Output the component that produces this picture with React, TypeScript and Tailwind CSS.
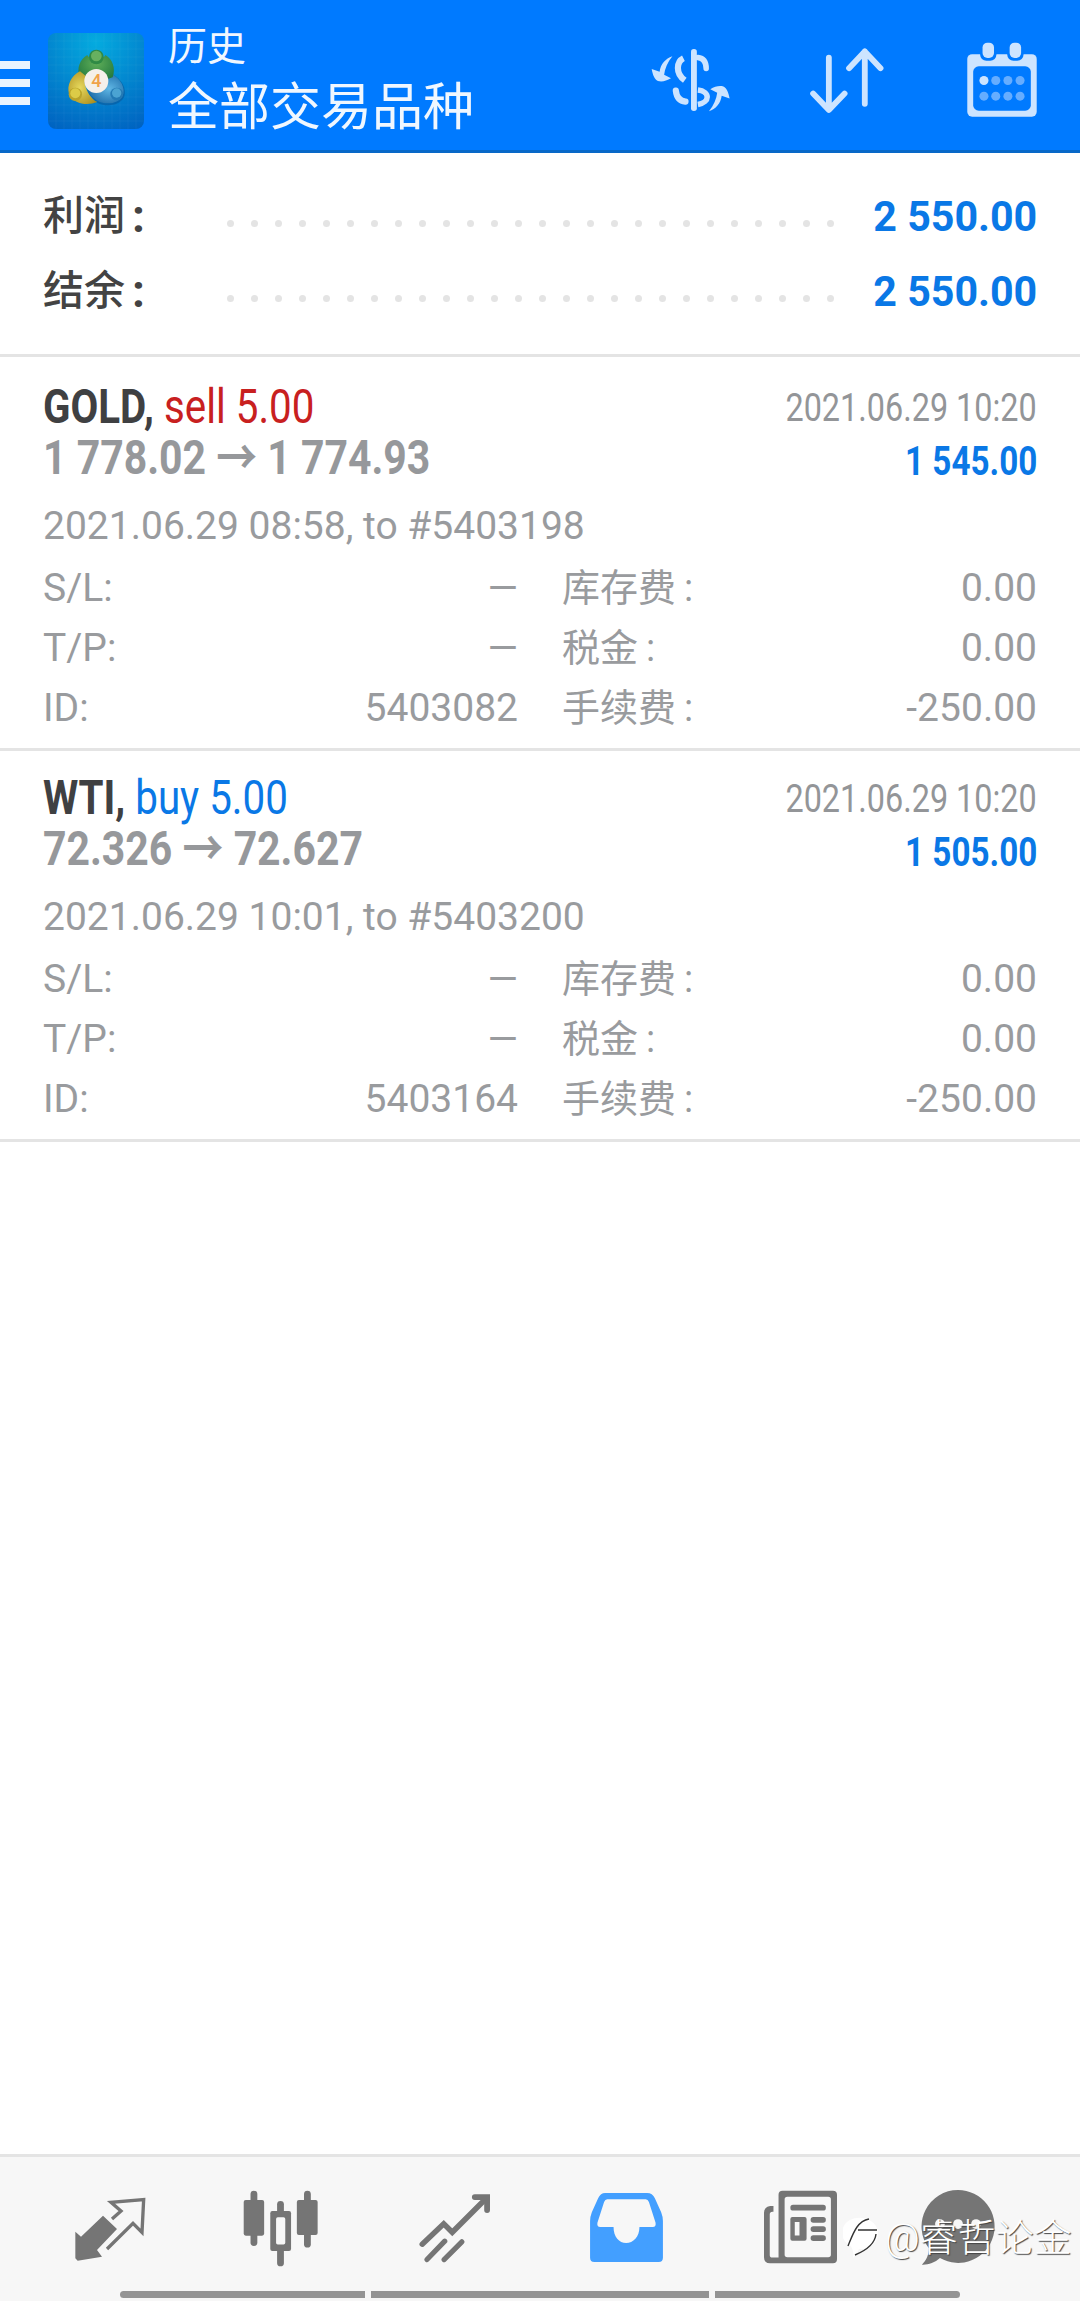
const font = "font-['Roboto','Noto_Sans_CJK_SC',sans-serif]";

function Logo() {
  const grid = [168, 192, 216, 240, 264, 288, 312, 336, 360, 384, 408];
  return (
    <svg width="96" height="96" viewBox="144 99 288 288" className="shrink-0">
      <defs>
        <radialGradient id="bgG" cx="0.5" cy="0.1" r="1">
          <stop offset="0" stopColor="#04abdf" />
          <stop offset="1" stopColor="#0062c0" />
        </radialGradient>
        <radialGradient id="gr" cx="0.5" cy="0.3" r="0.8">
          <stop offset="0" stopColor="#5fae58" />
          <stop offset="1" stopColor="#176f3a" />
        </radialGradient>
        <radialGradient id="ye" cx="0.4" cy="0.5" r="0.7">
          <stop offset="0" stopColor="#e6d85c" />
          <stop offset="1" stopColor="#a98a1c" />
        </radialGradient>
        <radialGradient id="bl" cx="0.6" cy="0.5" r="0.7">
          <stop offset="0" stopColor="#5fb6e4" />
          <stop offset="1" stopColor="#125f9f" />
        </radialGradient>
      </defs>
      <rect x="144" y="99" width="288" height="288" rx="24" fill="url(#bgG)" />
      {grid.map((g) => (
        <path key={g} d={`M${g} 99V387`} stroke="#ffffff" strokeOpacity="0.07" strokeWidth="2" />
      ))}
      {grid.map((g) => (
        <path key={g} d={`M144 ${g - 45}H432`} stroke="#ffffff" strokeOpacity="0.07" strokeWidth="2" />
      ))}
      <path d="M335 222C365 235 382 268 372 292C358 318 318 322 292 308C276 298 266 284 262 270L320 250Z" fill="#0a4f8f" opacity="0.5" />
      <path d="M335 222C362 235 378 266 368 288C355 312 318 316 292 302C276 292 266 280 262 268L320 248Z" fill="url(#bl)" />
      <path d="M262 165C240 178 228 205 240 232L289 248L338 232C348 205 338 178 316 165C310 180 268 180 262 165Z" fill="url(#gr)" />
      <path d="M240 214C215 226 198 256 208 284C222 312 262 318 292 306C272 296 258 272 254 248L262 232Z" fill="url(#ye)" />
      <circle cx="289" cy="171" r="22" fill="#2f8a45" />
      <circle cx="289" cy="168" r="16" fill="#67b060" />
      <circle cx="226" cy="283" r="20" fill="#b9a32a" />
      <circle cx="226" cy="280" r="15" fill="#dccb47" />
      <circle cx="350" cy="282" r="19" fill="#2379b4" />
      <circle cx="350" cy="279" r="14" fill="#4ba3d2" />
      <circle cx="289" cy="243" r="36" fill="#f5f0ea" />
      <text x="289" y="262" textAnchor="middle" fontSize="54" fontWeight="500" fill="#f0a34a" fontFamily="Roboto">4</text>
    </svg>
  );
}

function DollarIcon() {
  const c = "#cde4ff";
  const arrow = "M382 168C362 175 348 190 345 213L322 205C325 222 330 235 340 240C352 243 365 240 378 232L358 222C360 205 368 185 382 168Z";
  return (
    <svg width="80" height="66" viewBox="320 145 232 190" className="shrink-0">
      <rect x="436" y="147" width="17" height="180" rx="8" fill={c} />
      <path d="M456 172C472 174 480 186 480 204" stroke={c} strokeWidth="16" fill="none" strokeLinecap="round" />
      <path d="M414 174C394 184 390 218 418 238" stroke={c} strokeWidth="18" fill="none" />
      <path d="M392 268C394 286 404 298 420 300" stroke={c} strokeWidth="18" fill="none" strokeLinecap="round" />
      <path d="M456 266C492 270 492 302 456 308" stroke={c} strokeWidth="16" fill="none" />
      <path d={arrow} fill={c} />
      <path d={arrow} fill={c} transform="rotate(180 435 248)" />
    </svg>
  );
}

function SortIcon() {
  return (
    <svg width="76" height="68" viewBox="778 145 222 195" className="shrink-0" fill="none" stroke="#cde4ff" strokeWidth="17" strokeLinecap="round" strokeLinejoin="round">
      <path d="M836 174V326M790 279L836 327L882 279" />
      <path d="M941 309V156M895 205L941 156L987 205" />
    </svg>
  );
}

function CalendarIcon() {
  const xs = [1291, 1325, 1360, 1395];
  return (
    <svg width="70" height="75" viewBox="1243 130 200 216" className="shrink-0">
      <rect x="1243" y="165" width="200" height="180" rx="14" fill="#cde4ff" />
      <rect x="1280" y="126" width="47" height="58" rx="18" fill="#007aff" />
      <rect x="1358" y="126" width="47" height="58" rx="18" fill="#007aff" />
      <rect x="1287" y="132" width="33" height="44" rx="14" fill="#cde4ff" />
      <rect x="1365" y="132" width="33" height="44" rx="14" fill="#cde4ff" />
      <rect x="1260" y="200" width="166" height="128" rx="16" fill="#007aff" />
      {xs.map((x, i) => (
        <circle key={x} cx={x} cy="241" r="13" fill={i === 0 ? "#cde4ff" : "#66adff"} />
      ))}
      {xs.map((x) => (
        <circle key={x} cx={x} cy="286" r="13" fill="#66adff" />
      ))}
    </svg>
  );
}

function Dots() {
  return (
    <div className="flex gap-[17px] items-center w-[607px] shrink-0">
      {Array.from({ length: 26 }).map((_, i) => (
        <span key={i} className="w-[7px] h-[7px] rounded-full bg-[#e4e4e4] shrink-0" />
      ))}
    </div>
  );
}

function SummaryRow({ label }: { label: string }) {
  return (
    <div className="flex items-center h-[75px]">
      <span className="w-[184px] shrink-0 text-[41px] leading-none font-medium text-[#434343] mb-[1px] flex items-center whitespace-nowrap">
        {label}
        <span className="ml-[7px] text-[46px] leading-none font-bold">:</span>
      </span>
      <div className="pt-[13px]">
        <Dots />
      </div>
      <span className="ml-auto text-[42px] leading-none font-bold text-[#0a78e6] mt-[1px] inline-block whitespace-nowrap origin-right scale-x-[0.98]">2 550.00</span>
    </div>
  );
}

function Field({ label, value, cjk }: { label: string; value: string; cjk?: boolean }) {
  return (
    <div className="flex items-center justify-between h-[60px] text-[39px] leading-none text-[#999b9e]">
      {cjk ? (
        <span className="text-[38px] leading-none">
          {label}
          <span className="ml-[8px]">:</span>
        </span>
      ) : (
        <span>{label}</span>
      )}
      <span>{value}</span>
    </div>
  );
}

type Trade = {
  sym: string; side: string; sideCls: string; price: string; profit: string;
  sub: string; id: string; cardCls: string;
};

function Card({ t }: { t: Trade }) {
  return (
    <div className={`shrink-0 border-b-[3px] border-[#e4e4e4] px-[43px] flex flex-col ${t.cardCls}`}>
      <div className="flex items-center justify-between h-[44px]">
        <span className="text-[48px] leading-[44px] whitespace-nowrap origin-left scale-x-[0.84] inline-block">
          <b className="font-bold text-[#3f4042]">{t.sym},</b> <span className={t.sideCls}>{t.side}</span>
        </span>
        <span className="mt-[2px] text-[39px] leading-none text-[#939598] whitespace-nowrap origin-right scale-x-[0.83] inline-block">2021.06.29 10:20</span>
      </div>
      <div className="flex items-center justify-between h-[60px]">
        <span className="-mt-[2px] text-[48px] leading-[44px] font-bold text-[#96989b] whitespace-nowrap origin-left scale-x-[0.853] inline-block">{t.price}</span>
        <span className="mt-[5px] text-[40px] leading-none font-bold text-[#0a78e6] whitespace-nowrap origin-right scale-x-[0.83] inline-block">{t.profit}</span>
      </div>
      <div className="mt-[7px] h-[60px] flex items-center text-[39px] leading-none text-[#999b9e] whitespace-nowrap">{t.sub}</div>
      <div className="mt-[2px] grid grid-cols-[475px_475px] gap-x-[44px]">
        <Field label="S/L:" value="—" />
        <Field label="库存费" value="0.00" cjk />
        <Field label="T/P:" value="—" />
        <Field label="税金" value="0.00" cjk />
        <Field label="ID:" value={t.id} />
        <Field label="手续费" value="-250.00" cjk />
      </div>
    </div>
  );
}

function TransferIcon() {
  return (
    <svg width="72" height="64" viewBox="213 166 212 192" className="shrink-0">
      <path d="M215 270L232 285L298 222L340 262L280 325L295 345L222 357L215 350Z" fill="#757575" />
      <path d="M310 322L388 245L415 272L420 174L322 182L352 208L325 232" fill="none" stroke="#757575" strokeWidth="10" />
    </svg>
  );
}

function CandleIcon() {
  return (
    <svg width="77" height="77" viewBox="705 148 224 226" className="shrink-0">
      <rect x="729" y="150" width="20" height="162" rx="10" fill="#757575" />
      <rect x="709" y="177" width="60" height="105" rx="6" fill="#757575" />
      <rect x="886" y="150" width="20" height="167" rx="10" fill="#757575" />
      <rect x="865" y="177" width="61" height="103" rx="6" fill="#757575" />
      <rect x="807" y="180" width="20" height="192" rx="10" fill="#757575" />
      <rect x="787" y="210" width="61" height="117" rx="6" fill="#757575" />
      <rect x="804" y="228" width="27" height="80" rx="5" fill="#f7f7f7" />
    </svg>
  );
}

function TrendIcon() {
  return (
    <svg width="74" height="70" viewBox="1212 155 212 205" className="shrink-0" fill="none" stroke="#757575" strokeLinecap="round" strokeLinejoin="miter">
      <path d="M1222 305L1285 245L1310 270L1406 174" strokeWidth="16" />
      <path d="M1376 167H1412V205" strokeWidth="17" />
      <path d="M1236 350L1288 296M1286 350L1338 298" strokeWidth="15" />
    </svg>
  );
}

function InboxIcon() {
  return (
    <svg width="73" height="69" viewBox="147 160 208 197" className="shrink-0">
      <path fillRule="evenodd" fill="#439fff" d="M190 160H310Q325 160 332 175L350 215Q355 228 355 240V345Q355 357 343 357H159Q147 357 147 345V240Q147 228 152 215L170 175Q177 160 190 160ZM196 178Q190 178 187 186L168 245Q166 257 176 257H214C214 285 230 303 250 303C270 303 288 285 288 257H326Q336 257 334 245L315 186Q312 178 306 178Z" />
    </svg>
  );
}

function NewsIcon() {
  return (
    <svg width="75" height="74" viewBox="645 148 220 219" className="shrink-0">
      <path fillRule="evenodd" fill="#757575" d="M702 150H851Q863 150 863 162V353Q863 365 851 365H665Q647 365 647 347V215Q647 198 665 195H675V212H672Q664 212 664 220V340Q664 348 672 348H690V162Q690 150 702 150ZM716 168Q708 168 708 176V339Q708 347 716 347H837Q845 347 845 339V176Q845 168 837 168Z" />
      <rect x="725" y="192" width="105" height="17" rx="8" fill="#757575" />
      <path fillRule="evenodd" fill="#757575" d="M731 228H767Q773 228 773 234V292Q773 298 767 298H731Q725 298 725 292V234Q725 228 731 228ZM738 243V283H752V243Z" />
      <rect x="785" y="228" width="45" height="17" rx="8" fill="#757575" />
      <rect x="785" y="255" width="45" height="17" rx="8" fill="#757575" />
      <rect x="785" y="282" width="45" height="17" rx="8" fill="#757575" />
    </svg>
  );
}

function ChatIcon() {
  return (
    <svg width="74" height="75" viewBox="1106 150 212 216" className="shrink-0">
      <path fill="#757575" d="M1212 150A105 105 0 1 1 1160 346C1145 360 1125 366 1108 365C1122 352 1128 335 1128 318A105 105 0 0 1 1212 150Z" />
      <circle cx="1160" cy="248" r="14" fill="#f7f7f7" />
      <circle cx="1212" cy="248" r="14" fill="#f7f7f7" />
      <circle cx="1264" cy="248" r="14" fill="#f7f7f7" />
    </svg>
  );
}

const trades: Trade[] = [
  { sym: "GOLD", side: "sell 5.00", sideCls: "text-[#c8201f]", price: "1 778.02 → 1 774.93", profit: "1 545.00", sub: "2021.06.29 08:58, to #5403198", id: "5403082", cardCls: "h-[394px] pt-[28px]" },
  { sym: "WTI", side: "buy 5.00", sideCls: "text-[#0a78e6]", price: "72.326 → 72.627", profit: "1 505.00", sub: "2021.06.29 10:01, to #5403200", id: "5403164", cardCls: "h-[391px] pt-[25px]" },
];

export default function App() {
  return (
    <div className={`relative w-[1080px] h-[2301px] overflow-hidden bg-white flex flex-col ${font}`}>
      <header className="h-[153px] shrink-0 bg-[#007aff] border-b-[3px] border-[#0868c8] pt-[12px] flex items-center">
        <div className="w-[30px] flex flex-col gap-[10px] shrink-0 mt-[3px]">
          <span className="h-[8px] bg-[#eaf4ff]" />
          <span className="h-[8px] bg-[#eaf4ff]" />
          <span className="h-[8px] bg-[#eaf4ff]" />
        </div>
        <div className="ml-[18px]">
          <Logo />
        </div>
        <div className="ml-[24px] flex flex-col text-[#f0f7ff] mt-[8px]">
          <span className="text-[39px] leading-[46px]">历史</span>
          <span className="text-[51px] leading-[76px]">全部交易品种</span>
        </div>
        <div className="ml-auto mr-[43px] flex items-center -mt-[4px]">
          <div className="mt-[3px]"><DollarIcon /></div>
          <div className="ml-[78px] mt-[3px]"><SortIcon /></div>
          <div className="ml-[82px]"><CalendarIcon /></div>
        </div>
      </header>

      <section className="h-[204px] shrink-0 border-b-[3px] border-[#e4e4e4] px-[43px] pt-[26px]">
        <SummaryRow label="利润" />
        <SummaryRow label="结余" />
      </section>

      {trades.map((t) => (
        <Card key={t.sym} t={t} />
      ))}

      <div className="flex-1" />

      <footer className="relative h-[147px] shrink-0 bg-[#f7f7f7] border-t-[3px] border-[#e4e4e4] pl-[74px] pt-[33px] flex items-start">
        <div className="mt-[7px]"><TransferIcon /></div>
        <div className="ml-[96px]"><CandleIcon /></div>
        <div className="ml-[99px] mt-[3px]"><TrendIcon /></div>
        <div className="ml-[98px] mt-[3px]"><InboxIcon /></div>
        <div className="ml-[100px]"><NewsIcon /></div>
        <div className="ml-[83px]"><ChatIcon /></div>
        <div className="absolute left-[120px] bottom-[3px] flex gap-[6px]">
          <span className="w-[245px] h-[7px] rounded-l-full bg-[#949494]" />
          <span className="w-[338px] h-[7px] bg-[#949494]" />
          <span className="w-[245px] h-[7px] rounded-r-full bg-[#949494]" />
        </div>
        <div className="absolute left-[843px] top-[59px] flex items-center">
          <svg width="38" height="44" viewBox="0 0 38 44" className="shrink-0">
            <path d="M19 2A17 15 0 1 1 16 33C14 38 11 41 10 42C11 38 10 34 8 30A17 15 0 0 1 19 2Z" fill="#ffffff" />
            <path d="M26 3C14 5 10 18 5 30M15 14H34M33 18C32 28 24 34 12 39" fill="none" stroke="#333333" strokeWidth="1.4" />
          </svg>
          <span className="ml-[4px] text-[38px] leading-none font-light text-white whitespace-nowrap [text-shadow:1px_1px_1px_#444444]">@睿哲论金</span>
        </div>
      </footer>
    </div>
  );
}
